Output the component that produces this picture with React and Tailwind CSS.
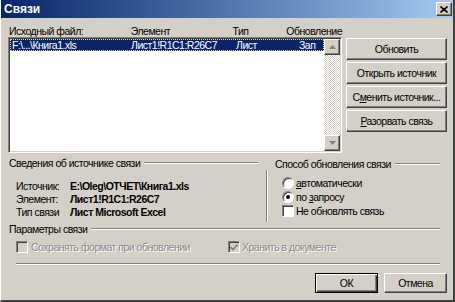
import React from "react";

const raised =
  "border border-t-white border-l-white border-r-[#404040] border-b-[#404040] shadow-[inset_-1px_-1px_#808080] bg-[#d4d0c8]";
const sunken =
  "border border-t-[#808080] border-l-[#808080] border-r-white border-b-white shadow-[inset_1px_1px_#404040,inset_-1px_-1px_#d4d0c8]";

function Etched({ className = "" }) {
  return <div className={`h-[2px] border-t border-t-[#808080] border-b border-b-white ${className}`} />;
}

function Btn({ children, def }) {
  if (def) {
    return (
      <div className="h-[20px] w-[63px] border border-black bg-[#d4d0c8] shadow-[inset_1px_1px_#fff,inset_-1px_-1px_#404040,inset_-2px_-2px_#808080] flex items-center justify-center">
        {children}
      </div>
    );
  }
  return (
    <div className={`${raised} h-[22px] flex items-center justify-center whitespace-nowrap`}>{children}</div>
  );
}

function Radio({ checked }) {
  return (
    <div className="w-[12px] h-[12px] rounded-full border border-t-[#808080] border-l-[#808080] border-r-white border-b-white bg-white shadow-[inset_1px_1px_#404040] flex items-center justify-center">
      {checked && <div className="w-[4px] h-[4px] rounded-full bg-black" />}
    </div>
  );
}

function Check({ checked, disabled }) {
  return (
    <div
      className={`w-[12px] h-[12px] shrink-0 border border-t-[#808080] border-l-[#808080] border-r-white border-b-white shadow-[inset_1px_1px_#404040] flex items-center justify-center ${
        disabled ? "bg-[#d4d0c8]" : "bg-white"
      }`}
    >
      {checked && (
        <svg width="8" height="7" viewBox="0 0 8 7">
          <path d="M0.5 3 L3 5.5 L7.5 0.5" stroke={disabled ? "#808080" : "#000"} strokeWidth="1.6" fill="none" />
        </svg>
      )}
    </div>
  );
}

export default function App() {
  return (
    <div className="w-[455px] h-[302px] bg-[#d4d0c8] border-l border-l-white border-r-2 border-r-[#404040] border-b-2 border-b-[#404040] flex flex-col overflow-hidden text-[10.5px] tracking-[-0.5px] leading-[12px] text-black whitespace-nowrap font-['Liberation_Sans',Arial,sans-serif]">
      {/* title bar */}
      <div className="h-[18px] bg-gradient-to-r from-[#0a246a] to-[#a6caf0] flex items-center justify-between pl-[3px] pr-[1px]">
        <span className="text-white font-bold text-[12px] tracking-normal">Связи</span>
        <div className={`${raised} w-[16px] h-[14px] flex items-center justify-center`}>
          <svg width="8" height="7" viewBox="0 0 8 7">
            <path d="M0.5 0.5 L7.5 6.5 M7.5 0.5 L0.5 6.5" stroke="#000" strokeWidth="1.6" />
          </svg>
        </div>
      </div>

      <div className="flex-1 flex flex-col pl-[7px] pr-[6px]">
        {/* list + buttons */}
        <div className="flex mt-[7px]">
          <div className="w-[334px] flex flex-col">
            <div className="h-[12px] flex pl-[1px]">
              <span className="w-[122px]">Исходный файл:</span>
              <span className="w-[102px]">Элемент</span>
              <span className="w-[54px]">Тип</span>
              <span>Обновление</span>
            </div>
            <div className={`${sunken} h-[116px] bg-white flex p-[1px]`}>
              <div className="flex-1">
                <div className="h-[12px] bg-[#0a246a] text-white flex items-center border border-dotted border-[#e8d890] pl-[1px]">
                  <span className="w-[119px]">F:\...\Книга1.xls</span>
                  <span className="w-[105px]">Лист1!R1C1:R26C7</span>
                  <span className="w-[63px]">Лист</span>
                  <span>Зап</span>
                </div>
              </div>
              <div className="w-[16px] flex flex-col">
                <div className={`${raised} h-[16px] flex items-center justify-center`}>
                  <svg width="7" height="4" viewBox="0 0 7 4">
                    <polygon points="3.5,0 7,4 0,4" fill="#808080" />
                  </svg>
                </div>
                <div className="flex-1 bg-[image:repeating-conic-gradient(#d4d0c8_0_25%,#ffffff_0_50%)] bg-[length:2px_2px]" />
                <div className={`${raised} h-[16px] flex items-center justify-center`}>
                  <svg width="7" height="4" viewBox="0 0 7 4">
                    <polygon points="0,0 7,0 3.5,4" fill="#808080" />
                  </svg>
                </div>
              </div>
            </div>
          </div>
          <div className="ml-[4px] w-[101px] flex flex-col gap-[2px] pt-[13px]">
            <Btn>Обновить</Btn>
            <Btn>Открыть источник</Btn>
            <Btn>
              <span>
                С<span className="underline">м</span>енить источник...
              </span>
            </Btn>
            <Btn>
              <span>
                <span className="underline">Р</span>азорвать связь
              </span>
            </Btn>
          </div>
        </div>

        {/* middle groups */}
        <div className="flex mt-[4px] h-[66px] gap-[8px]">
          <div className="w-[250px] flex flex-col">
            <div className="h-[12px] flex items-center pl-[1px]">
              <span>Сведения об источнике связи</span>
              <Etched className="flex-1 ml-[4px]" />
            </div>
            <div className="mt-[10px] pl-[8px] flex flex-col">
              <div className="h-[13px] flex items-center">
                <span className="w-[54px]">Источник:</span>
                <span className="font-bold">E:\Oleg\ОТЧЕТ\Книга1.xls</span>
              </div>
              <div className="h-[13px] flex items-center">
                <span className="w-[54px]">Элемент:</span>
                <span className="font-bold">Лист1!R1C1:R26C7</span>
              </div>
              <div className="h-[13px] flex items-center">
                <span className="w-[54px]">Тип связи</span>
                <span className="font-bold">Лист Microsoft Excel</span>
              </div>
            </div>
          </div>
          <div className="flex-1 flex flex-col">
            <div className="h-[12px] flex items-center pl-[9px] mr-[7px] mt-[1px]">
              <span>Способ обновления связи</span>
              <Etched className="flex-1 ml-[4px]" />
            </div>
            <div className="flex">
              <div className="w-[2px] h-[52px] border-l border-l-[#808080] border-r border-r-white" />
              <div className="pl-[14px] pt-[6px] flex flex-col">
                <div className="h-[14px] flex items-center gap-[1px]">
                  <Radio />
                  <span className="ml-[1px]">
                    <span className="underline">а</span>втоматически
                  </span>
                </div>
                <div className="h-[14px] flex items-center gap-[1px]">
                  <Radio checked />
                  <span className="ml-[1px]">
                    по <span className="underline">з</span>апросу
                  </span>
                </div>
                <div className="h-[14px] flex items-center gap-[1px]">
                  <Check />
                  <span className="ml-[1px]">Не обновлять связь</span>
                </div>
              </div>
            </div>
          </div>
        </div>

        {/* params */}
        <div className="h-[12px] flex items-center pl-[1px] mr-[7px]">
          <span>Параметры связи</span>
          <Etched className="flex-1 ml-[4px]" />
        </div>
        <div className="mt-[6px] h-[12px] flex items-center pl-[8px] text-[#8a8a8a] [text-shadow:1px_1px_0_#fff]">
          <div className="w-[212px] flex items-center gap-[3px]">
            <Check disabled />
            <span>Сохранять формат при обновлении</span>
          </div>
          <div className="flex items-center gap-[2px]">
            <Check checked disabled />
            <span>Хранить в документе</span>
          </div>
        </div>
        <Etched className="mt-[10px] ml-[8px] mr-[7px]" />
        <div className="mt-[8px] flex justify-end gap-[6px]">
          <Btn def>ОК</Btn>
          <div className={`${raised} h-[20px] w-[63px] flex items-center justify-center`}>Отмена</div>
        </div>
      </div>
    </div>
  );
}
